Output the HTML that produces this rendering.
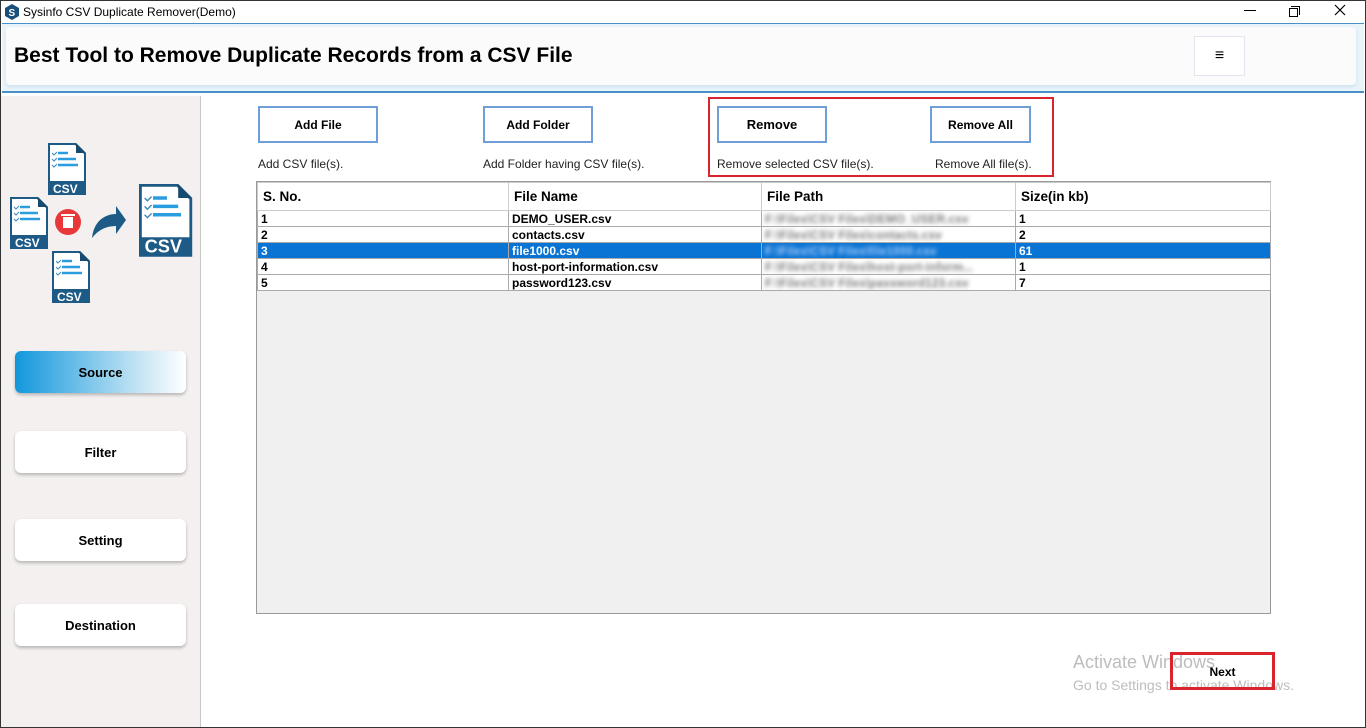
<!DOCTYPE html>
<html><head><meta charset="utf-8"><style>
*{margin:0;padding:0;box-sizing:border-box}
body{width:1366px;height:728px;position:relative;overflow:hidden;background:#fff;font-family:"Liberation Sans",sans-serif;color:#000}
.a{position:absolute}
.win{left:0;top:0;width:1366px;height:728px;border:1px solid #333}
.btn{position:absolute;background:#fff;border:2px solid #6f9fd8;font-weight:bold;font-size:12px;display:flex;align-items:center;justify-content:center}
.lbl{position:absolute;font-size:12px;color:#222}
.side{position:absolute;left:15px;width:171px;height:42px;border-radius:6px;background:#fff;box-shadow:0 2px 3px rgba(0,0,0,.25);font-weight:bold;font-size:13px;display:flex;align-items:center;justify-content:center}
table{border-collapse:collapse;font-size:12px;font-weight:bold}
td{border:1px solid #aaa;height:16px;padding:0 3px;line-height:14px;white-space:nowrap;overflow:hidden}
th{border:1px solid #ccc;height:28px;text-align:left;padding:0 5px;font-size:13.5px}
.bl{color:transparent;text-shadow:0 0 4px rgba(90,90,90,.8)}
.sel td{background:#0a74d4;color:#fff}
.sel td.bl{color:transparent;text-shadow:0 0 4px rgba(200,220,255,.9)}
</style></head><body>
<div class="a win"></div>
<svg class="a" style="left:5px;top:4px" width="14" height="16" viewBox="0 0 14 16"><path d="M7 0L14 4V12L7 16L0 12V4Z" fill="#1a4f7a"/><text x="3.5" y="12" font-size="10" font-weight="bold" fill="#fff" font-family="Liberation Sans">S</text></svg>
<div class="a" style="left:23px;top:5px;font-size:12px">Sysinfo CSV Duplicate Remover(Demo)</div>
<div class="a" style="left:1244px;top:10px;width:12px;height:1px;background:#000"></div>
<div class="a" style="left:1291px;top:6px;width:9px;height:9px;border:1px solid #000;border-left:none;border-bottom:none"></div>
<div class="a" style="left:1289px;top:8px;width:9px;height:9px;border:1px solid #000;background:#fff"></div>
<svg class="a" style="left:1334px;top:4px" width="12" height="12"><path d="M1 1L11 11M11 1L1 11" stroke="#000" stroke-width="1.2"/></svg>
<div class="a" style="left:2px;top:23px;width:1362px;height:70px;border-top:1px solid #4a90c8;border-bottom:2px solid #4a90c8;background:#e9f3fa"></div>
<div class="a" style="left:6px;top:27px;width:1350px;height:58px;background:#fbfbfc;border-radius:4px;box-shadow:0 2px 3px #cfe2ef"></div>
<div class="a" style="left:14px;top:44px;font-size:21px;font-weight:bold">Best Tool to Remove Duplicate Records from a CSV File</div>
<div class="a" style="left:1194px;top:36px;width:51px;height:40px;background:#fff;border:1px solid #e3e6ee;font-size:16px;font-weight:bold;display:flex;align-items:center;justify-content:center">≡</div>
<div class="a" style="left:1px;top:96px;width:200px;height:631px;background:#f4f0f0;border-right:1px solid #c8c8c8"></div>
<svg class="a" style="left:8px;top:140px" width="190" height="170" viewBox="0 0 190 170">
<defs><g id="d"><path d="M0 0H28L38 10V52H0Z" fill="#1d5a86"/><path d="M2 2H27L36 11V38H2Z" fill="#fff"/><path d="M28 0V10H38" fill="#174a6f"/><path d="M10 10h10M10 16h18M10 22h20" stroke="#2a9de0" stroke-width="2.5"/><path d="M4 10l2 2 3-3M4 16l2 2 3-3M4 22l2 2 3-3" stroke="#3a8bbd" stroke-width="1" fill="none"/></g></defs>
<g transform="translate(40,3)"><use href="#d"/><text x="5" y="50" font-size="12" font-weight="bold" fill="#fff" font-family="Liberation Sans">CSV</text></g>
<g transform="translate(2,57)"><use href="#d"/><text x="5" y="50" font-size="12" font-weight="bold" fill="#fff" font-family="Liberation Sans">CSV</text></g>
<g transform="translate(44,111)"><use href="#d"/><text x="5" y="50" font-size="12" font-weight="bold" fill="#fff" font-family="Liberation Sans">CSV</text></g>
<circle cx="60" cy="82" r="13" fill="#e8383a"/><rect x="55" y="77" width="10" height="11" fill="#fff"/><rect x="53" y="74" width="14" height="2" fill="#fff"/>
<path d="M84 98C86 80 98 74 108 74V66L118 80L108 94V86C98 86 90 90 84 98Z" fill="#1d5a86"/>
<g transform="translate(131,44) scale(1.4)"><use href="#d"/><text x="4" y="49" font-size="13" font-weight="bold" fill="#fff" font-family="Liberation Sans">CSV</text></g>
</svg>
<div class="side" style="top:351px;background:linear-gradient(90deg,#1297dc,#bfe2f3 70%,#fff)">Source</div>
<div class="side" style="top:431px">Filter</div>
<div class="side" style="top:519px">Setting</div>
<div class="side" style="top:604px">Destination</div>
<div class="btn" style="left:258px;top:106px;width:120px;height:37px">Add File</div>
<div class="btn" style="left:483px;top:106px;width:110px;height:37px">Add Folder</div>
<div class="btn" style="left:717px;top:106px;width:110px;height:37px;font-size:13px">Remove</div>
<div class="btn" style="left:930px;top:106px;width:101px;height:37px">Remove All</div>
<div class="lbl" style="left:258px;top:157px">Add CSV file(s).</div>
<div class="lbl" style="left:483px;top:157px">Add Folder having CSV file(s).</div>
<div class="lbl" style="left:717px;top:157px">Remove selected CSV file(s).</div>
<div class="lbl" style="left:935px;top:157px">Remove All file(s).</div>
<div class="a" style="left:708px;top:97px;width:346px;height:80px;border:2px solid #d9232d"></div>
<div class="a" style="left:256px;top:181px;width:1015px;height:433px;background:#f0f0f0;border:1px solid #999"></div>
<table class="a" style="left:257px;top:182px;width:1013px;table-layout:fixed">
<colgroup><col style="width:251px"><col style="width:253px"><col style="width:254px"><col style="width:255px"></colgroup>
<tr style="background:#fff"><th>S. No.</th><th>File Name</th><th>File Path</th><th>Size(in kb)</th></tr>
<tr style="background:#fff"><td>1</td><td>DEMO_USER.csv</td><td class="bl">F:\Files\CSV Files\DEMO_USER.csv</td><td>1</td></tr>
<tr style="background:#fff"><td>2</td><td>contacts.csv</td><td class="bl">F:\Files\CSV Files\contacts.csv</td><td>2</td></tr>
<tr class="sel"><td>3</td><td>file1000.csv</td><td class="bl">F:\Files\CSV Files\file1000.csv</td><td>61</td></tr>
<tr style="background:#fff"><td>4</td><td>host-port-information.csv</td><td class="bl">F:\Files\CSV Files\host-port-inform...</td><td>1</td></tr>
<tr style="background:#fff"><td>5</td><td>password123.csv</td><td class="bl">F:\Files\CSV Files\password123.csv</td><td>7</td></tr>
</table>
<div class="a" style="left:1073px;top:652px;font-size:18px;color:#bdbdbd">Activate Windows</div>
<div class="a" style="left:1073px;top:677px;font-size:14px;color:#bdbdbd">Go to Settings to activate Windows.</div>
<div class="a" style="left:1170px;top:652px;width:105px;height:38px;border:3px solid #d9232d;font-weight:bold;font-size:12px;display:flex;align-items:center;justify-content:center;padding-top:2px">Next</div>
</body></html>
